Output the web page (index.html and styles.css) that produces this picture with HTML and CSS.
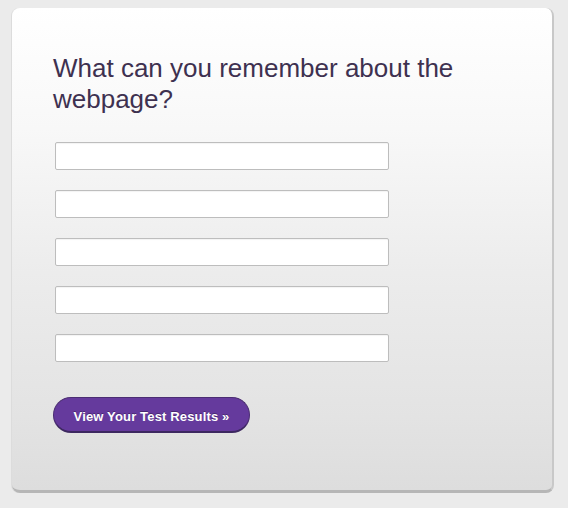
FILE: index.html
```html
<!DOCTYPE html>
<html>
<head>
<meta charset="utf-8">
<link rel="stylesheet" href="styles.css">
</head>
<body>
<div class="card">
  <h1 class="title">What can you remember about the webpage?</h1>
  <form class="fields">
    <input class="field" type="text">
    <input class="field" type="text">
    <input class="field" type="text">
    <input class="field" type="text">
    <input class="field" type="text">
    <button class="btn" type="button">View Your Test Results &raquo;</button>
  </form>
</div>
</body>
</html>
```
FILE: styles.css
```css
html, body {
  margin: 0;
  padding: 0;
  background: #ebebeb;
}
body {
  padding: 8px 0 0 12px;
  font-family: "Liberation Sans", Arial, sans-serif;
}
.card {
  box-sizing: border-box;
  width: 542px;
  height: 485px;
  border-radius: 8px;
  background: linear-gradient(180deg, #ffffff 0%, #f8f8f8 25%, #ececec 55%, #e3e3e3 85%, #dddddd 100%);
  border-right: 2px solid #c8c8c8;
  border-bottom: 3px solid #b6b6b6;
  box-shadow: -1px 0 0 #dcdcdc;
  padding: 45px 0 0 41px;
}
.title {
  margin: 0;
  width: 420px;
  font-size: 26px;
  font-weight: normal;
  line-height: 31px;
  color: #3e3150;
}
.fields {
  display: flex;
  flex-direction: column;
  align-items: flex-start;
  margin: 27px 0 0 2px;
  gap: 20px;
}
.field {
  box-sizing: border-box;
  width: 334px;
  height: 28px;
  margin: 0;
  border: 1px solid #bdbdbd;
  border-radius: 2px;
  background: #fff;
  box-shadow: inset 0 1px 1px rgba(0,0,0,0.05);
}
.btn {
  box-sizing: border-box;
  margin: 15px 0 0 -2px;
  width: 197px;
  height: 36px;
  border-radius: 18px;
  border: 1px solid #4b2d72;
  border-bottom: 2px solid #3d2860;
  background: #653a9d;
  color: #fff;
  font-family: "Liberation Sans", Arial, sans-serif;
  font-weight: bold;
  font-size: 13px;
  letter-spacing: 0.15px;
  padding: 3px 0 0;
  text-shadow: 0 -1px 0 rgba(0,0,0,0.3);
}
```
